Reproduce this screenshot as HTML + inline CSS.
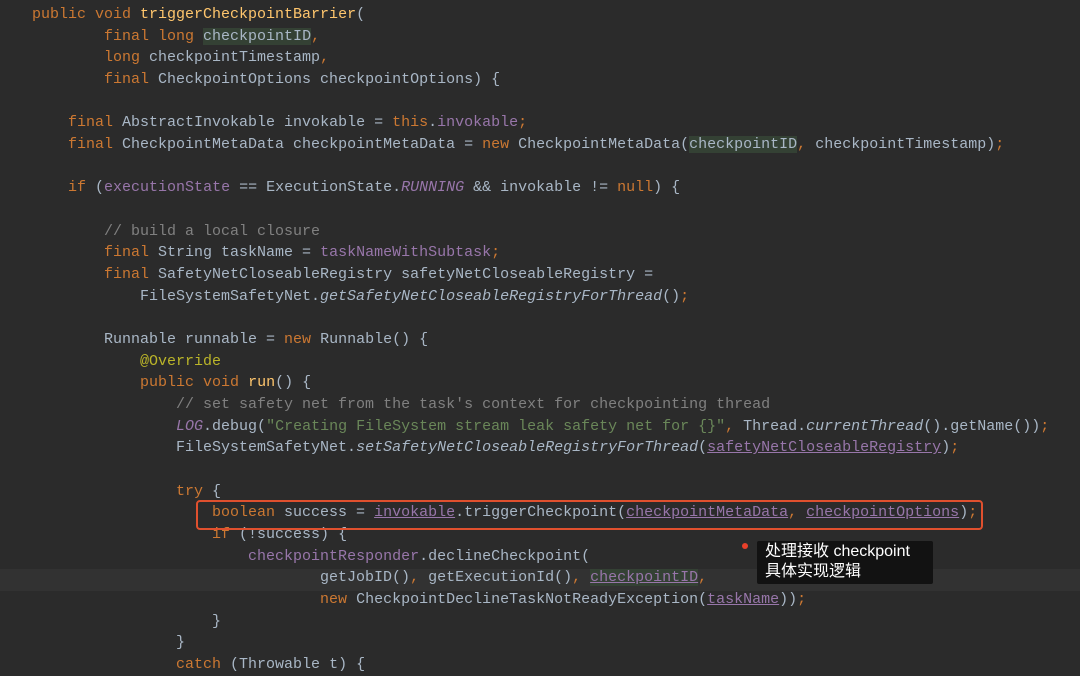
<!DOCTYPE html>
<html><head><meta charset="utf-8"><style>
html,body{margin:0;padding:0;}
body{width:1080px;height:663px;background:#2b2b2b;overflow:hidden;position:relative;font-family:"Liberation Mono",monospace;font-size:15px;color:#a9b7c6;}
.l{position:absolute;left:32px;white-space:pre;height:21.67px;line-height:21.67px;margin-top:2px}
.k{color:#cc7832}.f{color:#9876aa}.c{color:#808080}.m{color:#ffc66d}.s{color:#6a8759}.a{color:#bbb529}.i{font-style:italic}
.u{text-decoration:underline}
.h{background:#344134}
.cur{position:absolute;left:0;width:1080px;top:569px;height:22px;background:#323232}
.box{position:absolute;left:196px;top:500px;width:783px;height:26px;border:2px solid #e0502e;border-radius:4px}
.tip{position:absolute;left:757px;top:541px;width:176px;height:43px;background:#121212;border-radius:2px;color:#fff;font-family:"Liberation Sans","Noto Sans CJK SC",sans-serif;font-size:16px;line-height:20px;padding:1px 0 0 8px;box-sizing:border-box}
.dot{position:absolute;left:742px;top:543px;width:6px;height:6px;border-radius:3px;background:#e9402a}
</style></head><body>
<div class="cur"></div>
<div class="l" style="top:2px"><span class="k">public void </span><span class="m">triggerCheckpointBarrier</span>(</div>
<div class="l" style="top:23.7px">        <span class="k">final long </span><span class="h">checkpointID</span><span class="k">,</span></div>
<div class="l" style="top:45.3px">        <span class="k">long </span>checkpointTimestamp<span class="k">,</span></div>
<div class="l" style="top:67px">        <span class="k">final </span>CheckpointOptions checkpointOptions) {</div>
<div class="l" style="top:110.3px">    <span class="k">final </span>AbstractInvokable invokable = <span class="k">this</span>.<span class="f">invokable</span><span class="k">;</span></div>
<div class="l" style="top:132px">    <span class="k">final </span>CheckpointMetaData checkpointMetaData = <span class="k">new </span>CheckpointMetaData(<span class="h">checkpointID</span><span class="k">, </span>checkpointTimestamp)<span class="k">;</span></div>
<div class="l" style="top:175.4px">    <span class="k">if </span>(<span class="f">executionState</span> == ExecutionState.<span class="f i">RUNNING</span> &amp;&amp; invokable != <span class="k">null</span>) {</div>
<div class="l" style="top:218.7px">        <span class="c">// build a local closure</span></div>
<div class="l" style="top:240.4px">        <span class="k">final </span>String taskName = <span class="f">taskNameWithSubtask</span><span class="k">;</span></div>
<div class="l" style="top:262px">        <span class="k">final </span>SafetyNetCloseableRegistry safetyNetCloseableRegistry =</div>
<div class="l" style="top:283.7px">            FileSystemSafetyNet.<span class="i">getSafetyNetCloseableRegistryForThread</span>()<span class="k">;</span></div>
<div class="l" style="top:327px">        Runnable runnable = <span class="k">new </span>Runnable() {</div>
<div class="l" style="top:348.7px">            <span class="a">@Override</span></div>
<div class="l" style="top:370.4px">            <span class="k">public void </span><span class="m">run</span>() {</div>
<div class="l" style="top:392px">                <span class="c">// set safety net from the task's context for checkpointing thread</span></div>
<div class="l" style="top:413.7px">                <span class="f i">LOG</span>.debug(<span class="s">"Creating FileSystem stream leak safety net for {}"</span><span class="k">, </span>Thread.<span class="i">currentThread</span>().getName())<span class="k">;</span></div>
<div class="l" style="top:435.4px">                FileSystemSafetyNet.<span class="i">setSafetyNetCloseableRegistryForThread</span>(<span class="f u">safetyNetCloseableRegistry</span>)<span class="k">;</span></div>
<div class="l" style="top:478.7px">                <span class="k">try </span>{</div>
<div class="l" style="top:500.4px">                    <span class="k">boolean </span>success = <span class="f u">invokable</span>.triggerCheckpoint(<span class="f u">checkpointMetaData</span><span class="k">, </span><span class="f u">checkpointOptions</span>)<span class="k">;</span></div>
<div class="l" style="top:522px">                    <span class="k">if </span>(!success) {</div>
<div class="l" style="top:543.7px">                        <span class="f">checkpointResponder</span>.declineCheckpoint(</div>
<div class="l" style="top:565.4px">                                getJobID()<span class="k">, </span>getExecutionId()<span class="k">, </span><span class="f u h">checkpointID</span><span class="k">,</span></div>
<div class="l" style="top:587px">                                <span class="k">new </span>CheckpointDeclineTaskNotReadyException(<span class="f u">taskName</span>))<span class="k">;</span></div>
<div class="l" style="top:608.7px">                    }</div>
<div class="l" style="top:630.4px">                }</div>
<div class="l" style="top:652px">                <span class="k">catch </span>(Throwable t) {</div>
<div class="box"></div>
<div class="dot"></div>
<div class="tip">处理接收 checkpoint<br>具体实现逻辑</div>
</body></html>
